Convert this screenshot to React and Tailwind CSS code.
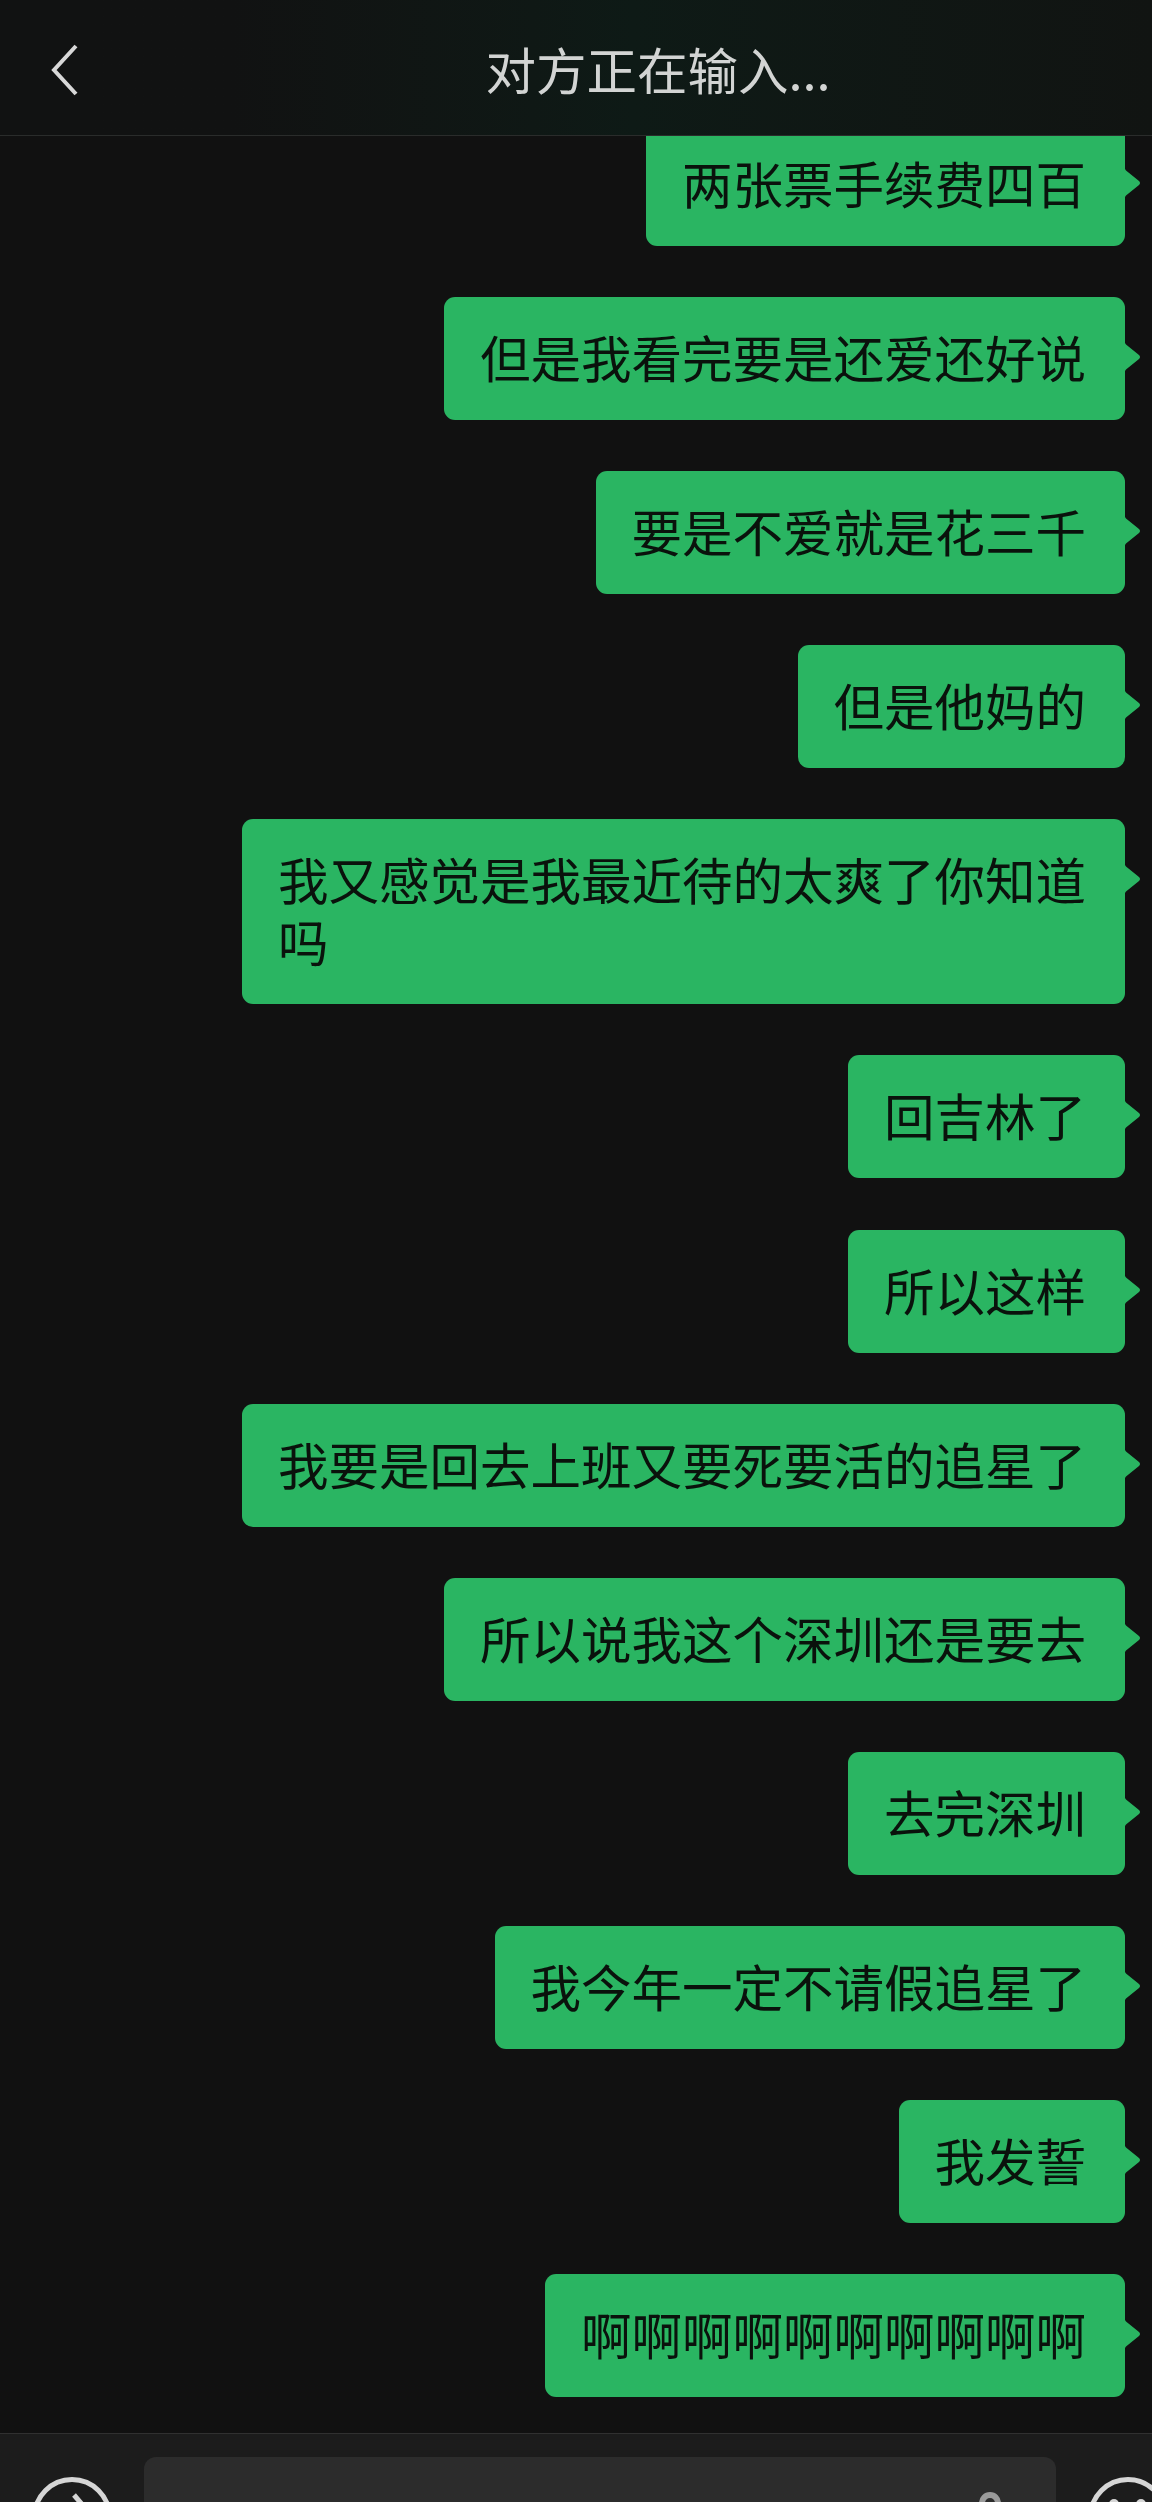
const messages = [
  "两张票手续费四百",
  "但是我看完要是还爱还好说",
  "要是不爱就是花三千",
  "但是他妈的",
  "我又感觉是我最近待的太爽了你知道吗",
  "回吉林了",
  "所以这样",
  "我要是回去上班又要死要活的追星了",
  "所以说我这个深圳还是要去",
  "去完深圳",
  "我今年一定不请假追星了",
  "我发誓",
  "啊啊啊啊啊啊啊啊啊啊",
];

function Bubble({ text }) {
  return (
    <div className="relative max-w-[883px] rounded-[11px] bg-[#2ab562] pb-[33px] pl-[36px] pr-[39px] pt-[28px] text-[50.5px] leading-[62px] text-[#0a120c]">
      {text}
      <svg className="absolute left-full top-[46px]" width="16" height="28" viewBox="0 0 16 28">
        <path d="M0 0 L1 1.5 L14 12 Q16 14 14 16 L1 26.5 L0 28 Z" fill="#2ab562" />
      </svg>
    </div>
  );
}

export default function App() {
  return (
    <div
      className="flex h-[2502px] w-[1152px] flex-col overflow-hidden bg-[#111111]"
      style={{ fontFamily: '"Noto Sans CJK SC", "Noto Sans", sans-serif' }}
      lang="zh-CN"
    >
      <header className="relative z-10 flex h-[136px] shrink-0 items-center justify-center border-b border-[#2a2c2b] bg-gradient-to-r from-[#111212] from-20% via-[#0e1a16] via-55% to-[#111412] pl-[164px]">
        <svg className="absolute left-[48px] top-[43px]" width="32" height="54" viewBox="0 0 32 54" fill="none">
          <path d="M28 3 L6 27 L28 51" stroke="#d8d8d8" strokeWidth="4" />
        </svg>
        <h1 className="text-[50.5px] font-normal leading-[60px] text-[#d2d4d3]">对方正在输入...</h1>
      </header>
      <main className="-mt-[13px] flex min-h-0 flex-1 flex-col items-end gap-[51.1px] pr-[27px]">
        {messages.map((m) => (
          <Bubble key={m} text={m} />
        ))}
      </main>
      <footer className="relative flex h-[69px] shrink-0 items-start overflow-hidden border-t border-[#303030] bg-[#1c1c1c] pl-[32px] pt-[23px]">
        <svg className="mt-[20px] shrink-0" width="80" height="80" viewBox="0 0 80 80" fill="none">
          <circle cx="40" cy="40" r="37.5" stroke="#d6d6d6" strokeWidth="5" />
          <path d="M42 18 L54 32 L42 46" stroke="#d6d6d6" strokeWidth="5" />
        </svg>
        <div className="relative ml-[32px] h-[100px] w-[912px] shrink-0 rounded-[12px] bg-[#2c2c2c]">
          <div className="absolute left-[835px] top-[35px] h-[40px] w-[22px] rounded-full border-[6px] border-[#9a9a9a]" />
        </div>
        <svg className="ml-[32px] mt-[20px] shrink-0" width="80" height="80" viewBox="0 0 80 80" fill="none">
          <circle cx="40" cy="40" r="37.5" stroke="#d6d6d6" strokeWidth="5" />
          <circle cx="26" cy="27" r="5" fill="#d6d6d6" />
          <circle cx="53" cy="27" r="5" fill="#d6d6d6" />
        </svg>
      </footer>
    </div>
  );
}
